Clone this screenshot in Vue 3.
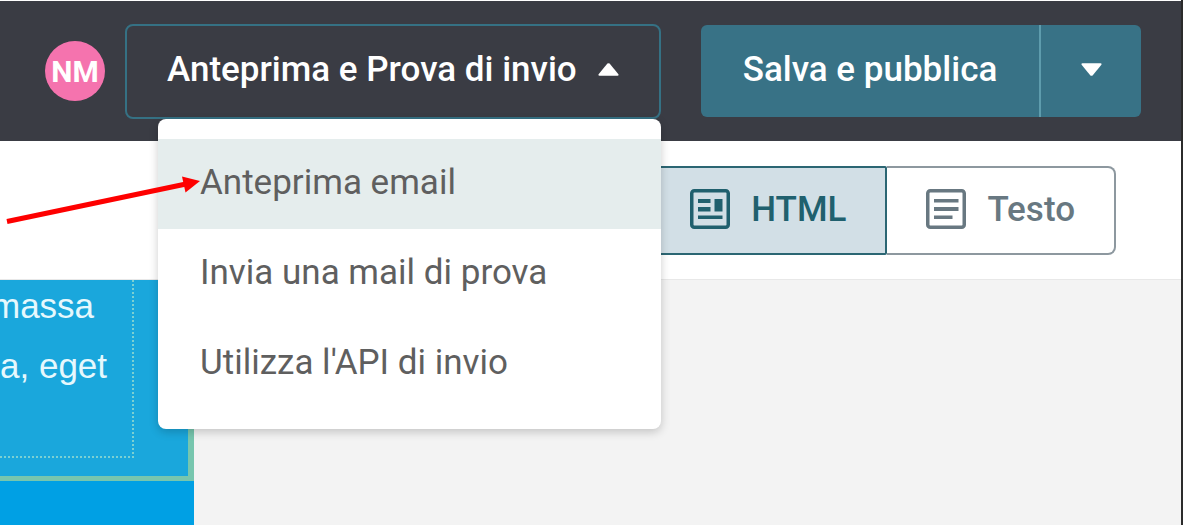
<script setup>
import { ref } from 'vue'

const menuItems = ['Anteprima email', 'Invia una mail di prova', "Utilizza l'API di invio"]
const active = ref(0)
const open = ref(true)
const view = ref('html')
</script>

<template>
  <div class="app">
    <header class="topbar">
      <span class="avatar">NM</span>
      <div class="dropdown">
        <button class="outline-btn" type="button" aria-haspopup="menu" :aria-expanded="open" @click="open = !open">
          <span>Anteprima e Prova di invio</span>
          <svg class="caret" viewBox="0 0 21 13" aria-hidden="true">
            <path d="M9.4 0.6Q10.5 -0.3 11.6 0.6L20.4 11.2Q21 12.6 19.5 12.8H1.5Q0 12.6 0.6 11.2Z" />
          </svg>
        </button>
        <div v-if="open" class="menu" role="menu">
          <button
            v-for="(item, i) in menuItems"
            :key="item"
            type="button"
            role="menuitem"
            class="menu-item"
            :class="{ active: i === active }"
            @mouseenter="active = i"
          >{{ item }}</button>
        </div>
      </div>
      <div class="split">
        <button class="split-main" type="button">Salva e pubblica</button>
        <button class="split-more" type="button" aria-label="Altre opzioni">
          <svg class="caret" viewBox="0 0 21 13" aria-hidden="true">
            <path d="M1.5 0.2H19.5Q21 0.4 20.4 1.8L11.6 12.4Q10.5 13.3 9.4 12.4L0.6 1.8Q0 0.4 1.5 0.2Z" />
          </svg>
        </button>
      </div>
    </header>

    <div class="toolbar">
      <div class="tabs">
        <button type="button" class="tab tab-html" :aria-pressed="view === 'html'" @click="view = 'html'">
          <svg class="tab-icon" viewBox="0 0 40 40" aria-hidden="true">
            <rect x="1.75" y="1.75" width="36.5" height="36.5" rx="2.5" fill="none" stroke="currentColor" stroke-width="3.5" />
            <path fill="currentColor" d="M8 10h12.5v4H8zM8 18h12.5v4.500H8zM24.500 10h8v12.500h-8zM8 26.500h24.500v3.500H8z" />
          </svg>
          <span>HTML</span>
        </button>
        <button type="button" class="tab tab-text" :aria-pressed="view === 'text'" @click="view = 'text'">
          <svg class="tab-icon" viewBox="0 0 40 40" aria-hidden="true">
            <rect x="1.75" y="1.75" width="36.5" height="36.5" rx="2.5" fill="none" stroke="currentColor" stroke-width="3.5" />
            <path fill="currentColor" d="M8 10h24.500v3.500H8zM8 18h24.500v4H8zM8 26.500h18.500v3.500H8z" />
          </svg>
          <span>Testo</span>
        </button>
      </div>
    </div>

    <main class="canvas">
      <div class="mail">
        <section class="block">
          <div class="copy">
            <p class="line cut">massa</p>
            <p class="line">a, eget</p>
          </div>
        </section>
      </div>
    </main>

    <svg class="pointer" viewBox="0 0 200 60" aria-hidden="true">
      <path d="M7 51.500L186 14" stroke="#fe0000" stroke-width="5" fill="none" />
      <path d="M200 11L182 6.500L185.500 22.500Z" fill="#fe0000" />
    </svg>
  </div>
</template>

<style>
body {
  margin: 0;
  background: #fff;
}
</style>

<style scoped>
.app {
  position: relative;
  display: flex;
  flex-direction: column;
  box-sizing: border-box;
  min-height: 100vh;
  padding-top: 1px;
  border-right: 1px solid #fff;
  box-shadow: inset -2px 0 0 #2b2b2b;
  padding-right: 2px;
  overflow: hidden;
  font-family: Roboto, "Liberation Sans", sans-serif;
  font-size: 35px;
}

button {
  margin: 0;
  padding: 0;
  border: 0;
  background: none;
  font: inherit;
  color: inherit;
  cursor: pointer;
}

.topbar {
  display: flex;
  justify-content: flex-end;
  align-items: center;
  height: 140px;
  padding-right: 40px;
  background: #3a3c44;
  color: #fff;
  font-weight: 500;
}

.avatar {
  display: flex;
  align-items: center;
  justify-content: center;
  width: 60px;
  height: 60px;
  margin-right: 20px;
  border-radius: 50%;
  background: #f573ae;
  font-size: 30px;
  font-weight: 700;
}

.dropdown {
  position: relative;
  margin-right: 40px;
}

.outline-btn {
  display: flex;
  align-items: center;
  justify-content: space-between;
  box-sizing: border-box;
  width: 536px;
  height: 95px;
  padding: 0 40px 3px;
  border: 2px solid #357184;
  border-radius: 8px;
}

.caret {
  width: 21px;
  height: 13px;
  fill: currentColor;
}

.menu {
  position: absolute;
  z-index: 2;
  top: 100%;
  right: 0;
  display: flex;
  flex-direction: column;
  width: 503px;
  padding: 20px 0;
  border-radius: 8px;
  background: #fff;
  box-shadow: 0 3px 10px rgba(0, 0, 0, 0.2);
}

.menu-item {
  height: 90px;
  padding: 0 42px 3px;
  color: #5f5f5f;
  font-weight: 400;
  text-align: left;
}

.menu-item.active {
  background: #e5eded;
}

.split {
  display: flex;
  width: 440px;
  height: 92px;
  border-radius: 6px;
  background: #387286;
  overflow: hidden;
}

.split-main {
  flex: 1;
  padding-bottom: 3px;
}

.split-more {
  display: flex;
  align-items: center;
  justify-content: center;
  box-sizing: border-box;
  width: 102px;
  padding-bottom: 3px;
  border-left: 2px solid #5e9cad;
}

.toolbar {
  display: flex;
  justify-content: flex-end;
  align-items: center;
  height: 138px;
  padding-right: 65px;
  border-bottom: 1px solid #e8e8e8;
  background: #fff;
}

.tabs {
  display: flex;
  font-weight: 500;
}

.tab {
  display: flex;
  align-items: center;
  gap: 21px;
  box-sizing: border-box;
  height: 89px;
  padding: 0 39px 2px;
}

.tab-html {
  border: 2px solid #2b6673;
  border-radius: 8px 2px 2px 8px;
  background: #d2dfe6;
  color: #20606e;
}

.tab-text {
  border: 2px solid #8d989f;
  border-left: 0;
  border-radius: 0 8px 8px 0;
  color: #687881;
}

.tab-icon {
  width: 40px;
  height: 40px;
}

.canvas {
  flex: 1;
  display: flex;
  background: #f3f3f3;
}

.mail {
  width: 194px;
  background: #00a0e4;
}

.block {
  box-sizing: border-box;
  height: 201px;
  padding-right: 54px;
  border-right: 6px solid #77c6ae;
  border-bottom: 5px solid #77c6ae;
  background: #1aa7dc;
}

.copy {
  display: flex;
  flex-direction: column;
  box-sizing: border-box;
  height: 178px;
  border: 2px dotted #7bd0d2;
  border-width: 0 2px 2px 0;
  color: #e6f8fd;
  font-family: "Liberation Sans", Arial, sans-serif;
  font-size: 35px;
  line-height: 60px;
}

.line {
  margin: 0;
}

.cut {
  margin-top: -4px;
  text-indent: -9px;
}

.pointer {
  position: absolute;
  z-index: 3;
  top: 170px;
  left: 0;
  width: 200px;
  height: 60px;
}
</style>
